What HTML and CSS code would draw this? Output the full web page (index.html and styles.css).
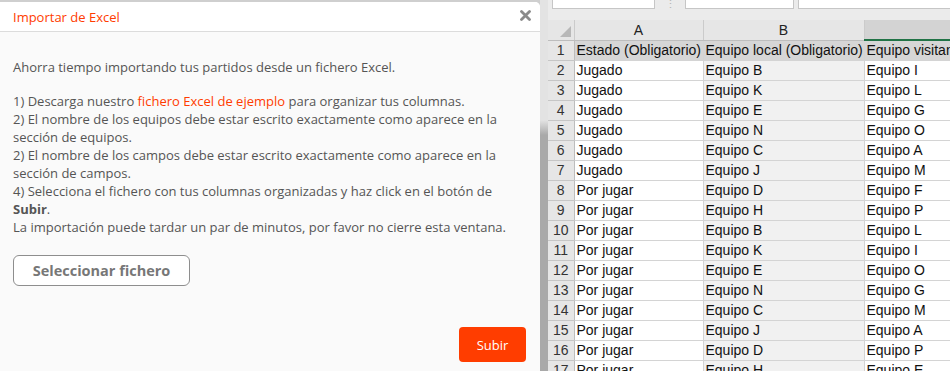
FILE: index.html
```html
<!DOCTYPE html>
<html lang="es">
<head>
<meta charset="utf-8">
<title>Importar de Excel</title>
<link rel="stylesheet" href="styles.css">
</head>
<body>
<div class="page">
  <section class="modal">
    <header class="modal-head">
      <h1>Importar de Excel</h1>
      <button class="close" aria-label="Cerrar">
        <svg width="11" height="11" viewBox="0 0 11 11"><path d="M1.5 1.5 L9.5 9.5 M9.5 1.5 L1.5 9.5" stroke="#8a8a8a" stroke-width="2.8" stroke-linecap="round"/></svg>
      </button>
    </header>
    <div class="modal-body">
      <p class="intro">Ahorra tiempo importando tus partidos desde un fichero Excel.</p>
      <p>1) Descarga nuestro <a href="#" class="link">fichero Excel de ejemplo</a> para organizar tus columnas.<br>
      2) El nombre de los equipos debe estar escrito exactamente como aparece en la sección de equipos.<br>
      2) El nombre de los campos debe estar escrito exactamente como aparece en la sección de campos.<br>
      4) Selecciona el fichero con tus columnas organizadas y haz click en el botón de <b>Subir</b>.<br>
      La importación puede tardar un par de minutos, por favor no cierre esta ventana.</p>
      <button class="select">Seleccionar fichero</button>
    </div>
    <div class="modal-foot">
      <button class="submit">Subir</button>
    </div>
  </section>
  <div class="divider"></div>
  <section class="sheet">
    <div class="toolbar">
      <div class="box namebox"></div>
      <div class="dots">⋮</div>
      <div class="box fxbox"></div>
      <div class="box formula"></div>
    </div>
    <table class="grid">
      <colgroup><col class="c-num"><col class="c-a"><col class="c-b"><col class="c-c"></colgroup>
      <thead>
        <tr><th class="corner"><span class="tri"></span></th><th>A</th><th>B</th><th class="sel"></th></tr>
      </thead>
      <tbody>
        <tr class="head-row"><td class="num">1</td><td>Estado (Obligatorio)</td><td>Equipo local (Obligatorio)</td><td>Equipo visitante (Obligatorio)</td></tr>
        <tr><td class="num">2</td><td>Jugado</td><td class="b">Equipo B</td><td>Equipo I</td></tr>
        <tr><td class="num">3</td><td>Jugado</td><td class="b">Equipo K</td><td>Equipo L</td></tr>
        <tr><td class="num">4</td><td>Jugado</td><td class="b">Equipo E</td><td>Equipo G</td></tr>
        <tr><td class="num">5</td><td>Jugado</td><td class="b">Equipo N</td><td>Equipo O</td></tr>
        <tr><td class="num">6</td><td>Jugado</td><td class="b">Equipo C</td><td>Equipo A</td></tr>
        <tr><td class="num">7</td><td>Jugado</td><td class="b">Equipo J</td><td>Equipo M</td></tr>
        <tr><td class="num">8</td><td>Por jugar</td><td class="b">Equipo D</td><td>Equipo F</td></tr>
        <tr><td class="num">9</td><td>Por jugar</td><td class="b">Equipo H</td><td>Equipo P</td></tr>
        <tr><td class="num">10</td><td>Por jugar</td><td class="b">Equipo B</td><td>Equipo L</td></tr>
        <tr><td class="num">11</td><td>Por jugar</td><td class="b">Equipo K</td><td>Equipo I</td></tr>
        <tr><td class="num">12</td><td>Por jugar</td><td class="b">Equipo E</td><td>Equipo O</td></tr>
        <tr><td class="num">13</td><td>Por jugar</td><td class="b">Equipo N</td><td>Equipo G</td></tr>
        <tr><td class="num">14</td><td>Por jugar</td><td class="b">Equipo C</td><td>Equipo M</td></tr>
        <tr><td class="num">15</td><td>Por jugar</td><td class="b">Equipo J</td><td>Equipo A</td></tr>
        <tr><td class="num">16</td><td>Por jugar</td><td class="b">Equipo D</td><td>Equipo P</td></tr>
        <tr><td class="num">17</td><td>Por jugar</td><td class="b">Equipo H</td><td>Equipo E</td></tr>
      </tbody>
    </table>
  </section>
</div>
</body>
</html>
```

FILE: styles.css
```css
html, body {
  margin: 0;
  height: 100%;
}
body {
  font-family: "Open Sans", sans-serif;
  background: #cfcfcf;
  overflow: hidden;
}
.page {
  display: flex;
  height: 371px;
}

/* ---------- modal ---------- */
.modal {
  width: 540px;
  flex: none;
  margin-top: 2px;
  background: #fafafa;
  border-top-right-radius: 5px;
  display: flex;
  flex-direction: column;
}
.modal-head {
  height: 29px;
  background: #fff;
  border-bottom: 1px solid #dcdcdc;
  border-top-right-radius: 5px;
  display: flex;
  align-items: center;
  justify-content: space-between;
  padding: 0 9px 0 13px;
}
.modal-head h1 {
  margin: 0;
  font-size: 13px;
  font-weight: 400;
  color: #ff3c00;
}
.close {
  border: 0;
  background: none;
  padding: 0;
  width: 12px;
  height: 12px;
  display: flex;
  align-items: center;
  justify-content: center;
  margin-top: -2px;
}
.modal-body {
  padding: 26px 20px 0 13px;
  font-size: 13px;
  line-height: 18px;
  color: #555;
}
.modal-body p {
  margin: 0;
}
.modal-body .intro {
  margin-bottom: 16px;
}
.modal-body b {
  font-weight: 700;
  color: #555;
}
.link {
  color: #ff3c00;
  text-decoration: none;
}
.select {
  margin-top: 19px;
  width: 177px;
  height: 31px;
  border: 1px solid #8e8e8e;
  border-radius: 6px;
  background: #fff;
  font-family: "Open Sans", sans-serif;
  font-size: 14.5px;
  font-weight: 700;
  color: #777;
}
.modal-foot {
  margin-top: auto;
  padding: 0 14px 9px;
  display: flex;
  justify-content: flex-end;
}
.submit {
  width: 67px;
  height: 35px;
  border: 0;
  border-radius: 4px;
  background: #ff3d00;
  color: #fff;
  font-family: "Open Sans", sans-serif;
  font-size: 13px;
}

/* ---------- divider ---------- */
.divider {
  width: 8px;
  flex: none;
  background: linear-gradient(#e3e3e3 0, #e3e3e3 120px, #a9a9a9 135px, #a9a9a9 100%);
}

/* ---------- sheet ---------- */
.sheet {
  flex: 1;
  min-width: 0;
  background: #ebebeb;
  overflow: hidden;
  font-family: "Liberation Sans", Arial, sans-serif;
}
.toolbar {
  height: 20px;
  display: flex;
  align-items: flex-start;
}
.box {
  height: 8px;
  background: #fff;
  border: 1px solid #c6c6c6;
  border-top: 0;
  overflow: hidden;
}
.namebox {
  margin-left: 4px;
  width: 101px;
}
.dots {
  width: 30px;
  text-align: center;
  color: #b5b5b5;
  font-size: 11px;
  line-height: 8px;
  overflow: hidden;
  height: 8px;
}
.fxbox {
  width: 107px;
}
.formula {
  margin-left: 4px;
  flex: 1;
  border-right: 0;
}
.grid {
  border-collapse: collapse;
  table-layout: fixed;
  width: 520px;
  font-size: 14px;
  color: #111;
}
.c-num { width: 26px; }
.c-a { width: 129px; }
.c-b { width: 161px; }
.c-c { width: 204px; }
.grid th {
  height: 19px;
  padding: 0;
  font-weight: 400;
  background: #e6e6e6;
  border-left: 1px solid #cbcbcb;
  border-bottom: 1px solid #bdbdbd;
  text-align: center;
  color: #222;
}
.grid th.corner {
  border-left: 0;
  position: relative;
}
.tri {
  position: absolute;
  right: 3px;
  bottom: 3px;
  width: 0;
  height: 0;
  border-left: 11px solid transparent;
  border-bottom: 11px solid #b8b8b8;
}
.grid th.sel {
  background: #d3d3d3;
  border-bottom: 2px solid #217346;
}
.grid td {
  height: 18px;
  padding: 0 0 1px 2px;
  white-space: nowrap;
  overflow: hidden;
  background: #fff;
  border: 1px solid #d4d4d4;
  border-top: 0;
  line-height: 18px;
}
.grid td.b {
  background: #f1f1f1;
}
.grid td.num {
  padding: 0 0 1px;
  text-align: center;
  background: #e6e6e6;
  border-left: 0;
  border-right: 1px solid #bdbdbd;
  border-bottom: 1px solid #c6c6c6;
  color: #333;
}
.grid tr.head-row td {
  background: #d6d6d6;
}
.grid tr.head-row td.num {
  background: #e6e6e6;
}
```
